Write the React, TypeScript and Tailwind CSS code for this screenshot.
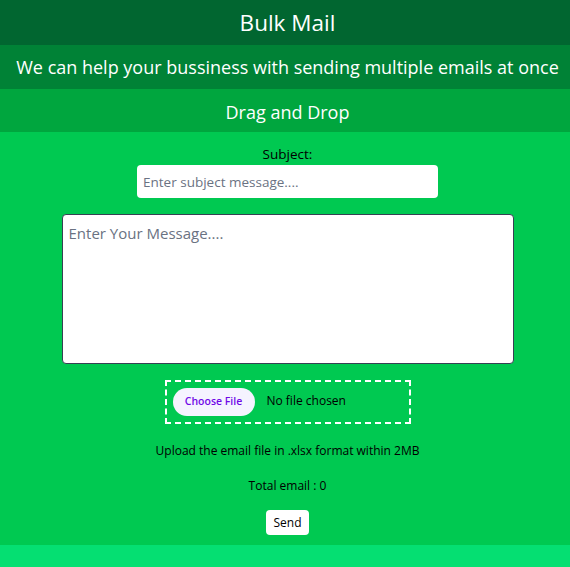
import React, { useState } from 'react';

const App: React.FC = () => {
  const [subject, setSubject] = useState('');
  const [message, setMessage] = useState('');
  const [total] = useState(0);

  return (
    <div className="w-full overflow-hidden">
      <div className="w-[575px] min-h-screen flex flex-col bg-green-400 font-['Open_Sans','Noto_Sans',sans-serif]">
        <h1 className="h-[45px] flex items-center justify-center bg-green-800 text-white text-[22.5px]">Bulk Mail</h1>
        <h2 className="h-[44px] flex items-center justify-center bg-green-700 text-white text-[18px]">
          We can help your bussiness with sending multiple emails at once
        </h2>
        <h3 className="h-[43px] flex items-center justify-center pt-[3px] bg-green-600 text-white text-[18px]">Drag and Drop</h3>

        <main className="bg-green-500 flex flex-col items-center pt-[12px] pb-[10px] text-black">
          <label className="text-[13.5px] leading-5">Subject:</label>
          <input
            value={subject}
            onChange={(e) => setSubject(e.target.value)}
            placeholder="Enter subject message...."
            className="mt-[1px] w-[301px] h-[33px] bg-white rounded px-[6px] text-[13.5px] outline-none placeholder:text-gray-500"
          />
          <textarea
            value={message}
            onChange={(e) => setMessage(e.target.value)}
            placeholder="Enter Your Message...."
            className="mt-4 w-[452px] h-[150px] bg-white border border-gray-700 rounded-sm px-[6px] py-[8px] text-[15px] leading-5 outline-none resize-none placeholder:text-gray-500"
          />
          <div className="mt-4 w-[246px] h-[44px] border-2 border-dashed border-white flex items-center px-[6px]">
            <input
              type="file"
              className="text-[12px] text-black file:mr-3 file:h-[28px] file:w-[82px] file:rounded-full file:border-0 file:bg-violet-50 file:text-violet-700 file:text-[10.5px] file:font-semibold"
            />
          </div>
          <p className="mt-[17px] text-[12px] leading-5">Upload the email file in .xlsx format within 2MB</p>
          <p className="mt-[15px] text-[12px] leading-5">Total email : {total}</p>
          <button className="mt-[14px] bg-white rounded px-[7px] h-[25px] text-[12px]">Send</button>
        </main>

        <div className="flex-1 bg-green-400" />
      </div>
    </div>
  );
};

export default App;
